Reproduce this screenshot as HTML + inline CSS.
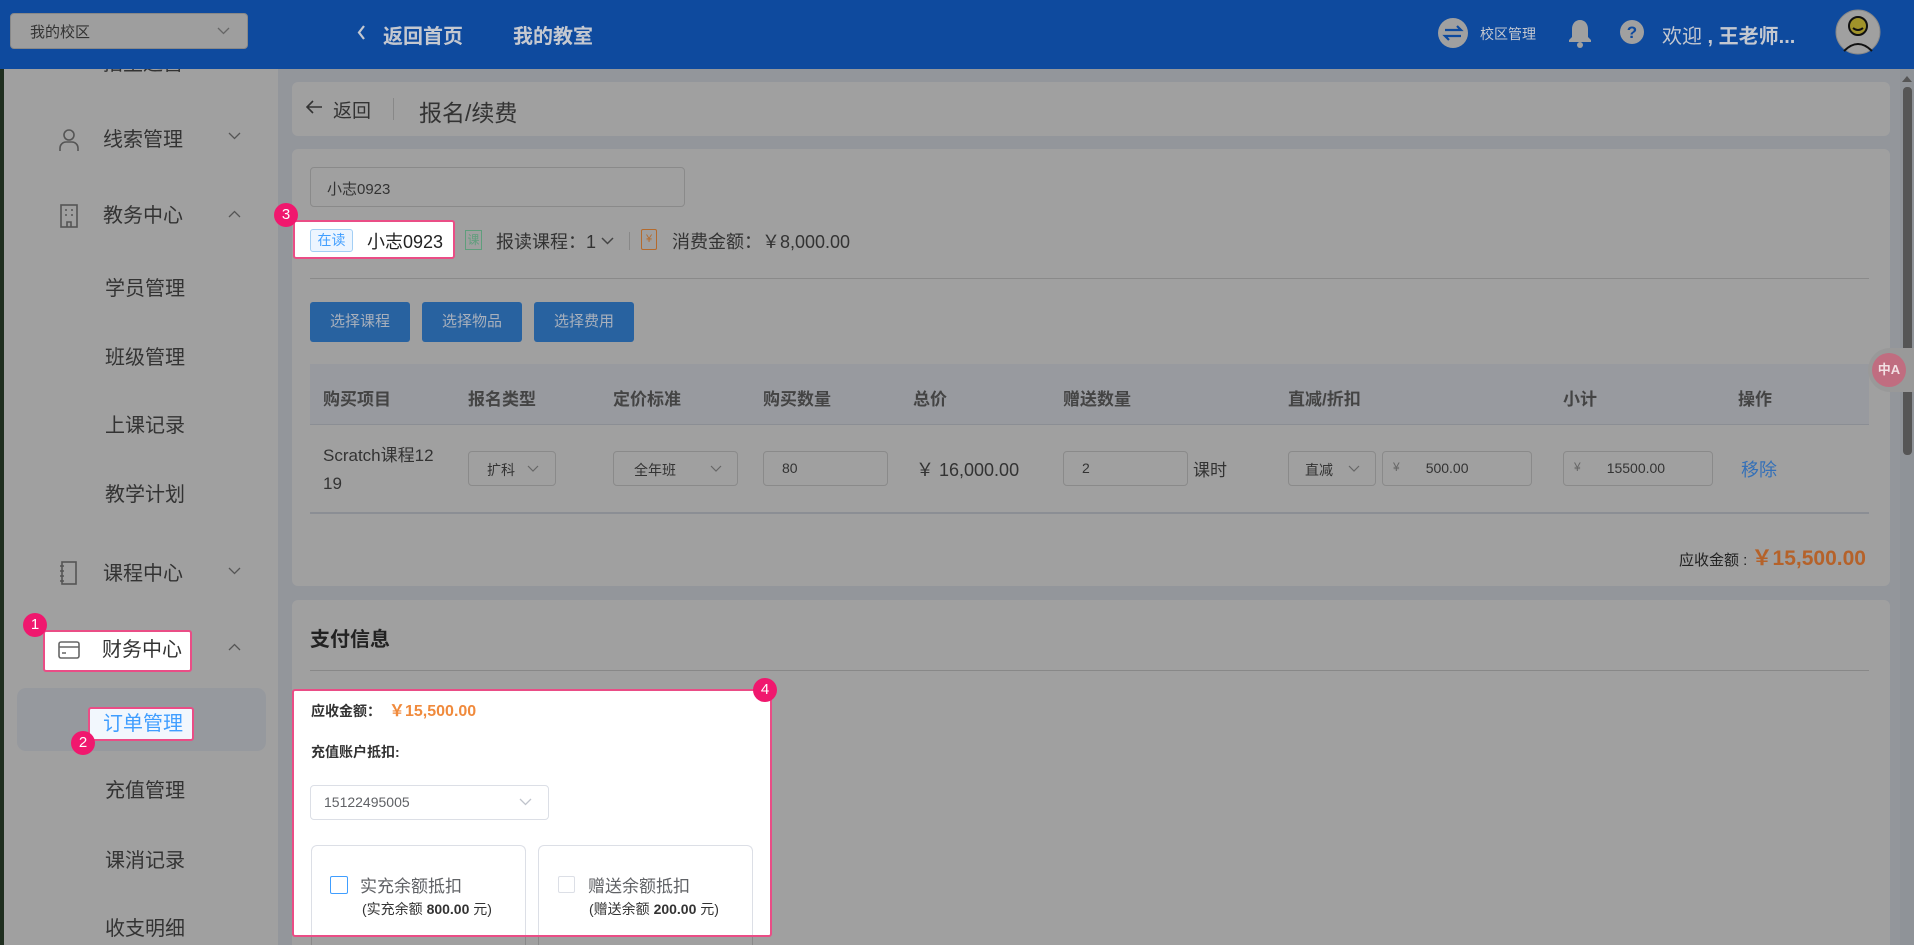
<!DOCTYPE html>
<html><head><meta charset="utf-8"><style>
*{margin:0;padding:0;box-sizing:border-box}
html,body{width:1914px;height:945px;overflow:hidden}
body{background:#93969b;font-family:"Liberation Sans","Noto Sans CJK SC",sans-serif;position:relative;color:#333}
.a{position:absolute}
.hdr{left:0;top:0;width:1914px;height:69px;background:#0e4a9e}
.side{left:0;top:69px;width:278px;height:876px;background:#a0a0a0}
.strip{left:0;top:0;width:4px;height:945px;background:#1f2e1f}
.mi{position:absolute;font-size:20px;color:#333;line-height:24px}
.card{position:absolute;background:#a0a0a0;border-radius:6px}
.th{position:absolute;top:385px;font-size:17px;font-weight:bold;color:#444}
.inp{position:absolute;border:1px solid #8a8a8a;border-radius:4px;background:#a0a0a0;font-size:14px;color:#333}
.badge{position:absolute;width:24px;height:24px;border-radius:12px;background:#f0186e;color:#fff;font-size:15px;text-align:center;line-height:24px}
.hl{position:absolute;background:#fff;border:2px solid #ea4d86;border-radius:3px}
.cv{position:absolute}
</style></head><body>
<div class="a side"></div>
<div class="a strip"></div>

<div class="mi" style="left:103px;top:52px;clip-path:inset(17px 0 0 0)">招生运营</div>
<svg class="a" style="left:58px;top:128px" width="22" height="24" viewBox="0 0 22 24" fill="none" stroke="#555" stroke-width="1.6"><circle cx="11" cy="7" r="5"/><path d="M2 23v-3a6 6 0 0 1 6-6h6a6 6 0 0 1 6 6v3"/></svg>
<div class="mi" style="left:103px;top:128px">线索管理</div>
<svg class="cv" style="left:228px;top:132px" width="13" height="8" viewBox="0 0 13 8"><path d="M1 1l5.5 5.5L12 1" stroke="#555" fill="none" stroke-width="1.3"/></svg>
<svg class="a" style="left:59px;top:204px" width="20" height="24" viewBox="0 0 20 24" fill="none" stroke="#555" stroke-width="1.6"><rect x="2" y="1" width="16" height="22"/><path d="M6 6h2M12 6h2M6 11h2M12 11h2M8 23v-5h4v5"/></svg>
<div class="mi" style="left:103px;top:204px">教务中心</div>
<svg class="cv" style="left:228px;top:210px" width="13" height="8" viewBox="0 0 13 8"><path d="M1 7l5.5-5.5L12 7" stroke="#555" fill="none" stroke-width="1.3"/></svg>
<div class="mi" style="left:105px;top:277px">学员管理</div>
<div class="mi" style="left:105px;top:346px">班级管理</div>
<div class="mi" style="left:105px;top:414px">上课记录</div>
<div class="mi" style="left:105px;top:483px">教学计划</div>
<svg class="a" style="left:59px;top:561px" width="20" height="24" viewBox="0 0 20 24" fill="none" stroke="#555" stroke-width="1.6"><rect x="3" y="1" width="14" height="22"/><path d="M1 5h4M1 10h4M1 15h4M1 20h4"/></svg>
<div class="mi" style="left:103px;top:562px">课程中心</div>
<svg class="cv" style="left:228px;top:567px" width="13" height="8" viewBox="0 0 13 8"><path d="M1 1l5.5 5.5L12 1" stroke="#555" fill="none" stroke-width="1.3"/></svg>
<div class="hl" style="left:43px;top:630px;width:149px;height:42px"></div>
<svg class="a" style="left:58px;top:641px" width="22" height="18" viewBox="0 0 22 18" fill="none" stroke="#666" stroke-width="1.6"><rect x="1" y="1" width="20" height="16" rx="2"/><path d="M1 6h20M4 12h4"/></svg>
<div class="mi" style="left:102px;top:638px;color:#333">财务中心</div>
<svg class="cv" style="left:228px;top:643px" width="13" height="8" viewBox="0 0 13 8"><path d="M1 7l5.5-5.5L12 7" stroke="#555" fill="none" stroke-width="1.3"/></svg>
<div class="badge" style="left:23px;top:613px">1</div>
<div class="a" style="left:17px;top:688px;width:249px;height:63px;background:#96999e;border-radius:9px"></div>
<div class="hl" style="left:88px;top:707px;width:106px;height:34px;background:#f2f7fd"></div>
<div class="mi" style="left:103px;top:712px;color:#409eff">订单管理</div>
<div class="badge" style="left:71px;top:731px">2</div>
<div class="mi" style="left:105px;top:779px">充值管理</div>
<div class="mi" style="left:105px;top:849px">课消记录</div>
<div class="mi" style="left:105px;top:917px">收支明细</div>

<div class="a hdr"></div>
<div class="a" style="left:10px;top:13px;width:238px;height:36px;background:#9e9e9e;border:1px solid #888;border-radius:4px"></div>
<div class="a" style="left:30px;top:21px;font-size:15px;color:#333">我的校区</div>
<svg class="cv" style="left:217px;top:27px" width="13" height="8" viewBox="0 0 13 8"><path d="M1 1l5.5 5.5L12 1" stroke="#666" fill="none" stroke-width="1.3"/></svg>
<svg class="cv" style="left:357px;top:25px" width="9" height="15" viewBox="0 0 9 15"><path d="M7 1L2 7.5 7 14" stroke="#c4c8d0" fill="none" stroke-width="2.2"/></svg>
<div class="a" style="left:383px;top:20px;font-size:20px;color:#c4c8d0;font-weight:bold">返回首页</div>
<div class="a" style="left:513px;top:20px;font-size:20px;color:#c4c8d0;font-weight:bold">我的教室</div>
<svg class="a" style="left:1438px;top:18px" width="30" height="30" viewBox="0 0 30 30"><circle cx="15" cy="15" r="15" fill="#a0a0a0"/><path d="M7 12h16l-4-4M23 18H7l4 4" stroke="#0e4a9e" stroke-width="2.2" fill="none"/></svg>
<div class="a" style="left:1480px;top:24px;font-size:14px;color:#c4c8d0">校区管理</div>
<svg class="a" style="left:1567px;top:19px" width="26" height="29" viewBox="0 0 26 29"><path d="M13 1c-5 0-8 4-8 9v8l-3 3v2h22v-2l-3-3v-8c0-5-3-9-8-9z" fill="#a0a0a0"/><circle cx="13" cy="26" r="3" fill="#a0a0a0"/></svg>
<svg class="a" style="left:1620px;top:20px" width="24" height="24" viewBox="0 0 24 24"><circle cx="12" cy="12" r="12" fill="#a0a0a0"/><text x="12" y="18" text-anchor="middle" font-size="17" font-weight="bold" fill="#0e4a9e" font-family="Liberation Sans">?</text></svg>
<div class="a" style="left:1662px;top:20px;font-size:20px;color:#c4c8d0;font-weight:bold"><span style="font-weight:normal">欢迎</span> , 王老师...</div>
<svg class="a" style="left:1835px;top:9px" width="46" height="46" viewBox="0 0 46 46"><circle cx="23" cy="23" r="22" fill="#a0a0a0" stroke="#888"/><circle cx="23" cy="17" r="9" fill="#a0932a" stroke="#111" stroke-width="2"/><path d="M18 19q5 4 10 0" stroke="#111" stroke-width="2" fill="none"/><path d="M9 42q14-14 28 0" stroke="#111" stroke-width="2" fill="none"/></svg>

<div class="a" style="left:1900px;top:69px;width:14px;height:876px;background:#8f9398"></div>
<div class="a" style="left:1903px;top:87px;width:9px;height:368px;background:#555;border-radius:4px"></div>
<svg class="a" style="left:1902px;top:76px" width="10" height="6" viewBox="0 0 10 6"><path d="M0 6L5 0l5 6z" fill="#555"/></svg>

<div class="card" style="left:292px;top:82px;width:1598px;height:54px"></div>
<svg class="a" style="left:306px;top:100px" width="17" height="14" viewBox="0 0 17 14"><path d="M16 7H2M7 1L1 7l6 6" stroke="#333" fill="none" stroke-width="1.6"/></svg>
<div class="a" style="left:333px;top:96px;font-size:19px;color:#333">返回</div>
<div class="a" style="left:393px;top:98px;width:1px;height:22px;background:#888"></div>
<div class="a" style="left:419px;top:94px;font-size:23px;color:#333">报名/续费</div>

<div class="card" style="left:292px;top:149px;width:1598px;height:437px"></div>
<div class="inp" style="left:310px;top:167px;width:375px;height:40px;padding:10px 0 0 16px;font-size:15px">小志0923</div>
<div class="hl" style="left:293px;top:220px;width:162px;height:39px"></div>
<div class="a" style="left:310px;top:229px;width:43px;height:23px;border:1px solid #a3cff5;border-radius:3px;background:#ecf5ff;color:#409eff;font-size:14px;text-align:center;line-height:21px">在读</div>
<div class="a" style="left:367px;top:228px;font-size:18px;color:#222">小志0923</div>
<div class="a" style="left:465px;top:230px;width:17px;height:20px;border:1px solid #5f9e7c;font-size:12px;color:#5f9e7c;text-align:center;line-height:18px">课</div>
<div class="a" style="left:496px;top:228px;font-size:18px;color:#333">报读课程：1</div>
<svg class="cv" style="left:601px;top:237px" width="13" height="8" viewBox="0 0 13 8"><path d="M1 1l5.5 5.5L12 1" stroke="#444" fill="none" stroke-width="1.5"/></svg>
<div class="a" style="left:629px;top:232px;width:1px;height:18px;background:#888"></div>
<div class="a" style="left:641px;top:229px;width:16px;height:21px;border:1.5px solid #b46a2c;border-radius:2px;font-size:11px;color:#b46a2c;text-align:center;line-height:18px">¥</div>
<div class="a" style="left:672px;top:228px;font-size:18px;color:#333">消费金额：￥8,000.00</div>
<div class="badge" style="left:274px;top:203px">3</div>
<div class="a" style="left:310px;top:278px;width:1559px;height:1px;background:#8a8a8a"></div>
<div class="a" style="left:310px;top:302px;width:100px;height:40px;background:#2862a0;border-radius:3px;color:#a8b0bc;font-size:15px;text-align:center;line-height:40px">选择课程</div>
<div class="a" style="left:422px;top:302px;width:100px;height:40px;background:#2862a0;border-radius:3px;color:#a8b0bc;font-size:15px;text-align:center;line-height:40px">选择物品</div>
<div class="a" style="left:534px;top:302px;width:100px;height:40px;background:#2862a0;border-radius:3px;color:#a8b0bc;font-size:15px;text-align:center;line-height:40px">选择费用</div>
<div class="a" style="left:310px;top:364px;width:1559px;height:61px;background:#989a9f;border-bottom:1px solid #8b8e94"></div>
<div class="th" style="left:323px">购买项目</div>
<div class="th" style="left:468px">报名类型</div>
<div class="th" style="left:613px">定价标准</div>
<div class="th" style="left:763px">购买数量</div>
<div class="th" style="left:913px">总价</div>
<div class="th" style="left:1063px">赠送数量</div>
<div class="th" style="left:1288px">直减/折扣</div>
<div class="th" style="left:1563px">小计</div>
<div class="th" style="left:1738px">操作</div>
<div class="a" style="left:323px;top:442px;font-size:17px;color:#333;line-height:28px">Scratch课程12<br>19</div>
<div class="inp" style="left:468px;top:451px;width:88px;height:35px;padding:8px 0 0 18px">扩科</div>
<svg class="cv" style="left:527px;top:465px" width="12" height="7" viewBox="0 0 12 7"><path d="M1 1l5 5 5-5" stroke="#666" fill="none" stroke-width="1.2"/></svg>
<div class="inp" style="left:613px;top:451px;width:125px;height:35px;padding:8px 0 0 20px">全年班</div>
<svg class="cv" style="left:710px;top:465px" width="12" height="7" viewBox="0 0 12 7"><path d="M1 1l5 5 5-5" stroke="#666" fill="none" stroke-width="1.2"/></svg>
<div class="inp" style="left:763px;top:451px;width:125px;height:35px;padding:8px 0 0 18px">80</div>
<div class="a" style="left:916px;top:456px;font-size:18px;color:#333">￥ 16,000.00</div>
<div class="inp" style="left:1063px;top:451px;width:125px;height:35px;padding:8px 0 0 18px">2</div>
<div class="a" style="left:1193px;top:456px;font-size:17px;color:#333">课时</div>
<div class="inp" style="left:1288px;top:451px;width:88px;height:35px;padding:8px 0 0 16px">直减</div>
<svg class="cv" style="left:1348px;top:465px" width="12" height="7" viewBox="0 0 12 7"><path d="M1 1l5 5 5-5" stroke="#666" fill="none" stroke-width="1.2"/></svg>
<div class="inp" style="left:1382px;top:451px;width:150px;height:35px;padding:8px 0 0 10px"><span style="color:#666;font-size:12px;vertical-align:top">¥</span><span style="margin-left:26px">500.00</span></div>
<div class="inp" style="left:1563px;top:451px;width:150px;height:35px;padding:8px 0 0 10px"><span style="color:#666;font-size:12px;vertical-align:top">¥</span><span style="margin-left:26px">15500.00</span></div>
<div class="a" style="left:1741px;top:456px;font-size:18px;color:#3470b8">移除</div>
<div class="a" style="left:310px;top:512px;width:1559px;height:2px;background:#8b8e94"></div>
<div class="a" style="left:1679px;top:542px;font-size:15px;color:#222">应收金额 : <span style="font-size:21px;font-weight:bold;color:#b5622a">￥15,500.00</span></div>

<div class="a" style="left:1868px;top:348px;width:46px;height:44px;background:#999;border-radius:22px 0 0 22px"></div>
<div class="a" style="left:1872px;top:353px;width:34px;height:34px;border-radius:17px;background:#c06d80;color:#f2dfe3;font-size:13px;font-weight:bold;text-align:center;line-height:34px">中A</div>

<div class="card" style="left:292px;top:600px;width:1598px;height:345px;border-radius:6px 6px 0 0"></div>
<div class="a" style="left:310px;top:623px;font-size:20px;font-weight:bold;color:#222">支付信息</div>
<div class="a" style="left:310px;top:670px;width:1559px;height:1px;background:#888"></div>
<div class="a" style="left:311px;top:845px;width:215px;height:100px;border:1px solid #8a8a8a;border-bottom:none;border-radius:6px 6px 0 0"></div>
<div class="a" style="left:538px;top:845px;width:215px;height:100px;border:1px solid #8a8a8a;border-bottom:none;border-radius:6px 6px 0 0"></div>
<div class="hl" style="left:292px;top:689px;width:480px;height:248px"></div>
<div class="a" style="left:311px;top:697px;font-size:14px;font-weight:bold;color:#333">应收金额：<span style="color:#f08a3c;font-size:16px;margin-left:8px">￥15,500.00</span></div>
<div class="a" style="left:311px;top:742px;font-size:14px;font-weight:bold;color:#333">充值账户抵扣:</div>
<div class="a" style="left:310px;top:785px;width:239px;height:35px;border:1px solid #dcdfe6;border-radius:4px;background:#fff;font-size:14px;color:#606266;padding:8px 0 0 13px">15122495005</div>
<svg class="cv" style="left:519px;top:798px" width="13" height="8" viewBox="0 0 13 8"><path d="M1 1l5.5 5.5L12 1" stroke="#c0c4cc" fill="none" stroke-width="1.3"/></svg>
<div class="a" style="left:311px;top:845px;width:215px;height:90px;border:1px solid #dcdfe6;border-bottom:none;border-radius:6px 6px 0 0"></div>
<div class="a" style="left:538px;top:845px;width:215px;height:90px;border:1px solid #dcdfe6;border-bottom:none;border-radius:6px 6px 0 0"></div>
<div class="a" style="left:330px;top:876px;width:18px;height:18px;border:1px solid #409eff;border-radius:2px"></div>
<div class="a" style="left:360px;top:872px;font-size:17px;color:#606266">实充余额抵扣</div>
<div class="a" style="left:362px;top:899px;font-size:14px;color:#333">(实充余额 <b>800.00</b> 元)</div>
<div class="a" style="left:558px;top:876px;width:17px;height:17px;border:1px solid #dcdfe6;border-radius:2px"></div>
<div class="a" style="left:588px;top:872px;font-size:17px;color:#606266">赠送余额抵扣</div>
<div class="a" style="left:589px;top:899px;font-size:14px;color:#333">(赠送余额 <b>200.00</b> 元)</div>
<div class="badge" style="left:753px;top:678px">4</div>
</body></html>
